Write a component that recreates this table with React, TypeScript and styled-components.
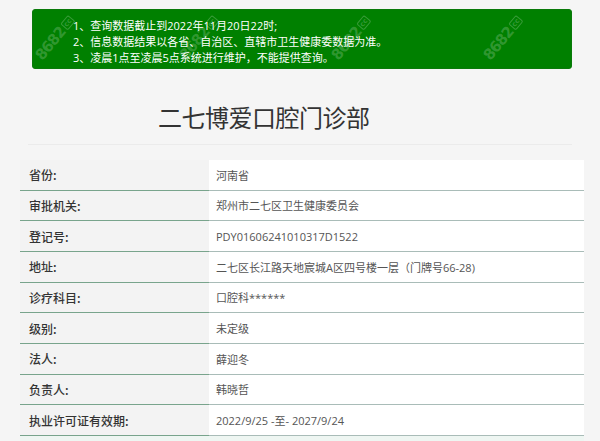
import React from "react";
import styled, { createGlobalStyle } from "styled-components";

const Global = createGlobalStyle`
  html, body { margin: 0; padding: 0; background: #f5f5f5; }
  body {
    font-family: "Open Sans", "Noto Sans CJK SC", sans-serif;
    font-size: 12px;
    color: #555;
  }
`;

const Page = styled.div`
  width: 564px;
  padding: 9px 16px 0 20px;
  overflow: hidden;
  height: 432px;
`;

const Notice = styled.div`
  position: relative;
  margin: 0 12px;
  height: 60px;
  box-sizing: border-box;
  padding: 8px 0 0 40px;
  background: #008000;
  border: 1px solid #0a7a0a;
  border-radius: 3px;
  overflow: hidden;
`;

const NoticeLine = styled.div`
  color: #fff;
  font-size: 11px;
  line-height: 16px;
  white-space: nowrap;
  position: relative;
  z-index: 1;
`;

const Watermark = styled.div<{ $x: number }>`
  position: absolute;
  left: ${(p) => p.$x}px;
  top: 19px;
  transform: rotate(-50deg);
  transform-origin: center;
  color: rgba(255, 255, 255, 0.2);
  font-family: "DejaVu Sans", sans-serif;
  font-weight: bold;
  font-size: 15px;
  line-height: 18px;
  letter-spacing: -1px;
  white-space: nowrap;
  z-index: 2;
  pointer-events: none;
  display: flex;
  align-items: center;
  gap: 2px;
`;

const WmTag = styled.span`
  font-size: 7px;
  border: 1px solid rgba(255, 255, 255, 0.22);
  border-radius: 2px;
  padding: 0 1px;
  letter-spacing: 0;
  line-height: 8px;
`;

const Title = styled.h1`
  margin: 32px 0 0;
  padding-left: 138px;
  font-family: "Noto Sans CJK SC", sans-serif;
  font-weight: 400;
  font-size: 24px;
  line-height: 32px;
  color: #333;
  letter-spacing: -0.5px;
`;

const Rule = styled.div`
  margin: 11px 12px 0 8px;
  height: 1px;
  background: #ebebeb;
`;

const Table = styled.div`
  margin-top: 15px;
  display: grid;
  grid-template-columns: 189px 1fr;
`;

const Label = styled.div<{ $tint?: boolean }>`
  height: 30.67px;
  box-sizing: border-box;
  border-bottom: 1px solid #78a48c;
  background: ${(p) => (p.$tint ? "#eef6f2" : "#f3f3f3")};
  padding-left: 9px;
  display: flex;
  align-items: center;
  color: #333;
  font-family: "Noto Sans CJK SC", sans-serif;
  font-weight: 500;
  font-size: 12px;
`;

const Value = styled.div<{ $tint?: boolean }>`
  height: 30.67px;
  box-sizing: border-box;
  border-bottom: 1px solid #a9bcb8;
  background: ${(p) => (p.$tint ? "#eef6f2" : "#fff")};
  padding-left: 7px;
  display: flex;
  align-items: center;
  color: #555;
  font-size: 11px;
  white-space: nowrap;
`;

const rows: [string, string][] = [
  ["省份:", "河南省"],
  ["审批机关:", "郑州市二七区卫生健康委员会"],
  ["登记号:", "PDY01606241010317D1522"],
  ["地址:", "二七区长江路天地宸城A区四号楼一层（门牌号66-28)"],
  ["诊疗科目:", "口腔科******"],
  ["级别:", "未定级"],
  ["法人:", "薛迎冬"],
  ["负责人:", "韩晓哲"],
  ["执业许可证有效期:", "2022/9/25 -至- 2027/9/24"],
];

export default function App() {
  return (
    <>
      <Global />
      <Page>
        <Notice>
          <NoticeLine>1、查询数据截止到2022年11月20日22时;</NoticeLine>
          <NoticeLine>2、信息数据结果以各省、自治区、直辖市卫生健康委数据为准。</NoticeLine>
          <NoticeLine>3、凌晨1点至凌晨5点系统进行维护，不能提供查询。</NoticeLine>
          {[-4, 140, 292, 444].map((x) => (
            <Watermark key={x} $x={x}>
              8682<WmTag>cc</WmTag>
            </Watermark>
          ))}
        </Notice>
        <Title>二七博爱口腔门诊部</Title>
        <Rule />
        <Table>
          {rows.map(([k, v]) => (
            <React.Fragment key={k}>
              <Label>{k}</Label>
              <Value>{v}</Value>
            </React.Fragment>
          ))}
          <Label $tint />
          <Value $tint />
        </Table>
      </Page>
    </>
  );
}
